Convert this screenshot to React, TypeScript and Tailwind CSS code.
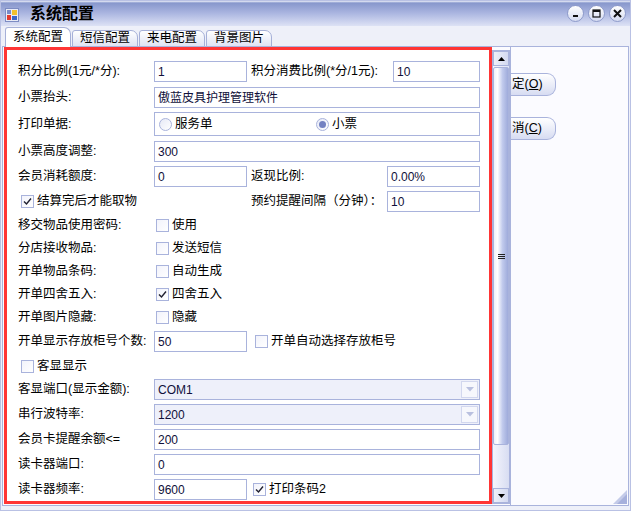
import React from 'react'

const font = 'font-["Liberation_Sans","Noto_Sans_CJK_SC",sans-serif]'

// Plain text box
function Box({ w, value, children, h = 'h-[21px]', bg = 'bg-white' }: { w: string; value?: string; children?: React.ReactNode; h?: string; bg?: string }) {
  return (
    <div className={`${w} ${h} ${bg} shrink-0 border border-[#a9b3dc] pl-[3px] flex items-center text-[12px] text-[#10103a]`}>
      {value}
      {children}
    </div>
  )
}

function Label({ w, text }: { w: string; text: string }) {
  return <div className={`${w} shrink-0 text-[12.5px] text-black whitespace-nowrap`}>{text}</div>
}

function Check({ checked, text }: { checked?: boolean; text: string }) {
  return (
    <div className="flex items-center gap-[3px] text-[12.5px] text-black whitespace-nowrap">
      <span className="w-[13px] h-[13px] border border-[#a9b3dc] bg-[linear-gradient(135deg,#f2f3fb,#ffffff)] flex items-center justify-center">
        {checked && (
          <svg width="9" height="9" viewBox="0 0 9 9">
            <path d="M1 4.5 L3.5 7 L8 1.5" stroke="#202030" strokeWidth="1.4" fill="none" />
          </svg>
        )}
      </span>
      {text}
    </div>
  )
}

function Radio({ checked, text }: { checked?: boolean; text: string }) {
  return (
    <div className="flex items-center gap-[3px] text-[12.5px] text-black">
      <span className="w-[13px] h-[13px] rounded-full border border-[#a9b3dc] bg-[linear-gradient(135deg,#e6e9f6,#ffffff)] flex items-center justify-center">
        {checked && <span className="w-[7px] h-[7px] rounded-full bg-[#7482c2]" />}
      </span>
      {text}
    </div>
  )
}

function Select({ value }: { value: string }) {
  return (
    <div className="w-[326px] h-[21px] shrink-0 border border-[#a9b3dc] bg-[#eef0fa] pl-[3px] pr-[1px] flex items-center justify-between text-[12px] text-[#10103a]">
      <span>{value}</span>
      <span className="w-[17px] h-[17px] border border-[#d2d7ee] bg-[#f6f7fc] flex items-center justify-center">
        <svg width="8" height="5" viewBox="0 0 8 5">
          <path d="M0 0 H8 L4 4.5 Z" fill="#b9c0df" />
        </svg>
      </span>
    </div>
  )
}

function Tab({ text, active }: { text: string; active?: boolean }) {
  return (
    <div
      className={`${active ? 'h-[20px] bg-white border-b-0 z-10' : 'h-[17px] bg-[linear-gradient(to_bottom,#ffffff,#dfe3f4)]'} border border-[#a6b0d8] rounded-tl-[3px] rounded-tr-[7px] px-[7px] flex items-center text-[12.5px] text-black`}
    >
      {text}
    </div>
  )
}

function WinButton({ children }: { children: React.ReactNode }) {
  return (
    <div className="w-[17px] h-[17px] rounded-full border border-[#8e9bcb] bg-[linear-gradient(to_bottom,#ffffff,#d5dbf1)] flex items-center justify-center">
      {children}
    </div>
  )
}

function ScrollArrow({ up }: { up?: boolean }) {
  return (
    <div className="h-[15px] border border-[#a9b3dc] bg-[linear-gradient(to_right,#eef0fa,#d3d9f0)] flex items-center justify-center">
      <svg width="7" height="4" viewBox="0 0 7 4">
        <path d={up ? 'M0 4 H7 L3.5 0 Z' : 'M0 0 H7 L3.5 4 Z'} fill="#000" />
      </svg>
    </div>
  )
}

function SideButton({ text, hot }: { text: string; hot: string }) {
  return (
    <div className="w-[45px] h-[23px] border border-l-0 border-[#a9b3dc] rounded-r-[9px] bg-[linear-gradient(to_bottom,#ffffff,#d7dcf2)] flex items-center pl-[1px] text-[12.5px] text-black whitespace-nowrap">
      {text}(<span className="underline">{hot}</span>)
    </div>
  )
}

export default function App() {
  return (
    <div className={`w-[631px] h-[511px] overflow-hidden bg-[#eef0f9] border border-[#b9c1e4] flex flex-col ${font}`}>
      {/* Title bar */}
      <div className="h-[25px] shrink-0 flex items-center pl-[4px] pr-[4px] bg-[linear-gradient(to_bottom,#eef0fa_0px,#8797cc_2px,#aab5e0_12px,#dde2f5_25px)]">
        <svg width="14" height="14" viewBox="0 0 14 14" className="mt-[2px]">
          <rect x="0.5" y="0.5" width="13" height="13" fill="#e8ebf6" stroke="#7d8cc3" />
          <rect x="2" y="2" width="4" height="4" fill="#7b8cc8" />
          <rect x="7" y="2" width="5" height="5" fill="#f2c12e" />
          <rect x="2" y="7" width="4" height="5" fill="#e23a2f" />
          <rect x="7" y="8" width="5" height="4" fill="#3c67c8" />
        </svg>
        <div className="ml-[11px] text-[16px] font-bold text-black">系统配置</div>
        <div className="ml-auto flex gap-[4px]">
          <WinButton>
            <svg width="9" height="9" viewBox="0 0 9 9"><rect x="2" y="6" width="5" height="2" fill="#111" /></svg>
          </WinButton>
          <WinButton>
            <svg width="9" height="9" viewBox="0 0 9 9"><rect x="1" y="1" width="7" height="7" fill="none" stroke="#111" strokeWidth="1.2" /><rect x="1" y="1" width="7" height="2" fill="#111" /></svg>
          </WinButton>
          <WinButton>
            <svg width="9" height="9" viewBox="0 0 9 9"><path d="M1 1 L8 8 M8 1 L1 8" stroke="#111" strokeWidth="2" /></svg>
          </WinButton>
        </div>
      </div>

      {/* Tab control */}
      <div className="flex-1 flex flex-col px-[1px] pb-[4px]">
        <div className="h-[21px] shrink-0 flex items-end gap-[1px] pl-[3px] -mb-[1px]">
          <Tab text="系统配置" active />
          <Tab text="短信配置" />
          <Tab text="来电配置" />
          <Tab text="背景图片" />
        </div>
        <div className="flex-1 flex border border-[#a9b3dc] bg-[#fbfbff]">
          {/* Scroll panel */}
          <div className="flex pl-[1px] pb-[1px]">
            <div className="w-[488px] border-[3px] border-[#ff3535] bg-white overflow-hidden pt-[11px] pl-[11px] flex flex-col">
              <div className="flex items-center h-[21px]">
                <Label w="w-[136px]" text="积分比例(1元/*分):" />
                <Box w="w-[93px]" value="1" />
                <Label w="w-[146px] pl-[4px]" text="积分消费比例(*分/1元):" />
                <Box w="w-[87px]" value="10" />
              </div>
              <div className="flex items-center h-[21px] mt-[5px]">
                <Label w="w-[136px]" text="小票抬头:" />
                <Box w="w-[326px]" value="傲蓝皮具护理管理软件" />
              </div>
              <div className="flex items-center h-[24px] mt-[4px]">
                <Label w="w-[136px]" text="打印单据:" />
                <Box w="w-[326px]" h="h-[24px]">
                  <div className="w-[158px] pl-[1px]"><Radio text="服务单" /></div>
                  <Radio checked text="小票" />
                </Box>
              </div>
              <div className="flex items-center h-[21px] mt-[5px]">
                <Label w="w-[136px]" text="小票高度调整:" />
                <Box w="w-[326px]" value="300" />
              </div>
              <div className="flex items-center h-[21px] mt-[4px]">
                <Label w="w-[136px]" text="会员消耗额度:" />
                <Box w="w-[93px]" value="0" />
                <Label w="w-[140px] pl-[4px]" text="返现比例:" />
                <Box w="w-[93px]" value="0.00%" />
              </div>
              <div className="flex items-center h-[21px] mt-[4px]">
                <div className="w-[233px] pl-[3px]"><Check checked text="结算完后才能取物" /></div>
                <Label w="w-[136px]" text="预约提醒间隔（分钟）：" />
                <Box w="w-[93px]" value="10" />
              </div>
              {[
                ['移交物品使用密码:', '使用', false],
                ['分店接收物品:', '发送短信', false],
                ['开单物品条码:', '自动生成', false],
                ['开单四舍五入:', '四舍五入', true],
                ['开单图片隐藏:', '隐藏', false],
              ].map(([l, t, c], i) => (
                <div key={l as string} className={`flex items-center h-[23px] ${i === 0 ? 'mt-[2px]' : ''}`}>
                  <Label w="w-[138px]" text={l as string} />
                  <Check checked={c as boolean} text={t as string} />
                </div>
              ))}
              <div className="flex items-center h-[21px] mt-[2px]">
                <Label w="w-[136px]" text="开单显示存放柜号个数:" />
                <Box w="w-[93px]" value="50" />
                <div className="pl-[8px]"><Check text="开单自动选择存放柜号" /></div>
              </div>
              <div className="flex items-center h-[22px] mt-[3px] pl-[3px]">
                <Check text="客显显示" />
              </div>
              <div className="flex items-center h-[21px] mt-[2px]">
                <Label w="w-[136px]" text="客显端口(显示金额):" />
                <Select value="COM1" />
              </div>
              <div className="flex items-center h-[21px] mt-[4px]">
                <Label w="w-[136px]" text="串行波特率:" />
                <Select value="1200" />
              </div>
              <div className="flex items-center h-[21px] mt-[4px]">
                <Label w="w-[136px]" text="会员卡提醒余额<=" />
                <Box w="w-[326px]" value="200" />
              </div>
              <div className="flex items-center h-[21px] mt-[4px]">
                <Label w="w-[136px]" text="读卡器端口:" />
                <Box w="w-[326px]" value="0" />
              </div>
              <div className="flex items-center h-[21px] mt-[4px]">
                <Label w="w-[136px]" text="读卡器频率:" />
                <Box w="w-[93px]" value="9600" />
                <div className="pl-[6px]"><Check checked text="打印条码2" /></div>
              </div>
            </div>
            {/* Scrollbar */}
            <div className="w-[18px] mt-[3px] border border-[#a9b3dc] bg-[linear-gradient(to_right,#f6f7fd,#e0e4f5)] flex flex-col">
              <ScrollArrow up />
              <div className="h-[378px] mt-[1px] border border-[#a9b3dc] rounded-[2px] bg-[linear-gradient(to_right,#eef1fb,#ffffff_25%,#c2cbed_60%,#9fabdb)] flex items-center justify-center">
                <svg width="7" height="5" viewBox="0 0 7 5">
                  <path d="M0 0.5 H7 M0 2.5 H7 M0 4.5 H7" stroke="#222" strokeWidth="1" />
                </svg>
              </div>
              <div className="flex-1 bg-[linear-gradient(to_right,#f4f5fc,#d8ddf2)]" />
              <ScrollArrow />
            </div>
          </div>
          {/* Right side */}
          <div className="flex-1 flex flex-col border-l border-[#a9b3dc] pt-[26px]">
            <SideButton text="定" hot="O" />
            <div className="mt-[21px]"><SideButton text="消" hot="C" /></div>
            <div className="mt-auto ml-auto mr-[1px] mb-[1px]">
              <svg width="14" height="14" viewBox="0 0 14 14">
                <path d="M14 0 L14 14 L0 14 Z" fill="#c4cbe9" />
                <path d="M14 4 L14 14 L4 14 Z" fill="#a7b1dc" />
              </svg>
            </div>
          </div>
        </div>
      </div>
    </div>
  )
}
